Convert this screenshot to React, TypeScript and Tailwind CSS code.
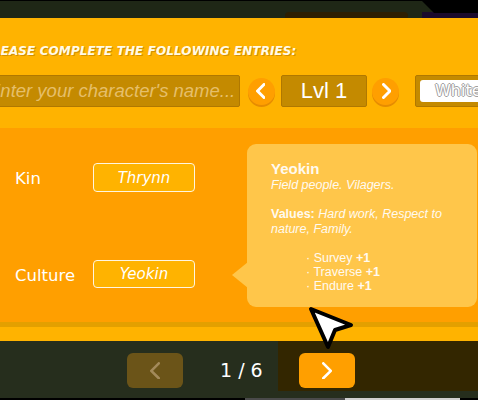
import React from "react";

const Chevron = ({ dir, color, size = 14, sw = 3 }: { dir: "l" | "r"; color: string; size?: number; sw?: number }) => (
  <svg width={size / 2 + sw} height={size + sw} viewBox={`0 0 ${size / 2 + sw} ${size + sw}`}>
    {dir === "l" ? (
      <polyline points={`${size / 2 + sw / 2},${sw / 2} ${sw / 2},${size / 2 + sw / 2} ${size / 2 + sw / 2},${size + sw / 2}`} fill="none" stroke={color} strokeWidth={sw} strokeLinecap="round" strokeLinejoin="round" />
    ) : (
      <polyline points={`${sw / 2},${sw / 2} ${size / 2 + sw / 2},${size / 2 + sw / 2} ${sw / 2},${size + sw / 2}`} fill="none" stroke={color} strokeWidth={sw} strokeLinecap="round" strokeLinejoin="round" />
    )}
  </svg>
);

export default function App() {
  return (
    <div className="relative w-[478px] h-[400px] overflow-hidden bg-[#262e1d]" style={{ fontFamily: '"DejaVu Sans", sans-serif' }}>
      {/* top bar */}
      <div className="relative h-[18px] bg-[#1f2716] border-t border-black flex items-end">
        <div className="ml-[285px] w-[123px] h-[6px] rounded-t-[4px] bg-[#2e1f02]" />
        <div className="ml-[14px] flex-1 h-[6px] bg-[#1b0b2c]" />
        <svg className="absolute right-0 top-0" width="56" height="12" viewBox="0 0 56 12">
          <polygon points="0,0 56,0 56,12 12,12" fill="#000" />
        </svg>
      </div>

      {/* top orange */}
      <div className="h-[110px] bg-[#ffb300] pt-[26px] overflow-hidden">
        <div
          className="ml-[-16px] whitespace-nowrap text-[12px] leading-[14px] font-bold italic text-[#fffbe8] tracking-[0.1px] [text-shadow:1px_1px_0_#d48f00]"
        >
          PLEASE COMPLETE THE FOLLOWING ENTRIES:
        </div>
        <div className="mt-[17px] flex items-center">
          <div className="ml-[-22px] w-[262px] h-[32px] shrink-0 bg-[#c48a00] border border-[#b07800] rounded-[2px] flex items-center pl-[9px] overflow-hidden">
            <span className="whitespace-nowrap italic text-[18.5px] text-[#e6bf6a]" style={{ fontFamily: '"Liberation Sans", Arial, sans-serif' }}>
              Enter your character's name...
            </span>
          </div>
          <div className="ml-[8px] w-[27px] h-[27px] shrink-0 rounded-full bg-[#ff9f00] shadow-[0_2px_0_#e68c00] flex items-center justify-center pr-[2px]">
            <Chevron dir="l" color="#fff" size={13} sw={3} />
          </div>
          <div className="ml-[6px] w-[86px] h-[32px] shrink-0 bg-[#c48a00] border border-[#b07800] rounded-[2px] flex items-center justify-center">
            <span className="text-[22px] text-white leading-none" style={{ fontFamily: '"Liberation Sans", Arial, sans-serif' }}>Lvl 1</span>
          </div>
          <div className="ml-[5px] w-[27px] h-[27px] shrink-0 rounded-full bg-[#ff9f00] shadow-[0_2px_0_#e68c00] flex items-center justify-center pl-[2px]">
            <Chevron dir="r" color="#fff" size={13} sw={3} />
          </div>
          <div className="ml-[16px] w-[80px] h-[32px] shrink-0 bg-[#c48a00] border border-[#b07800] rounded-[2px] p-[4px] pr-0">
            <div className="h-full bg-white rounded-l-[3px] flex items-center pl-[15px]">
              <span
                className="text-[16px] text-white leading-none [text-shadow:-1px_0_0_#a0a0a0,1px_0_0_#a0a0a0,0_-1px_0_#a0a0a0,0_1px_0_#a0a0a0]"
              >
                White
              </span>
            </div>
          </div>
        </div>
      </div>

      {/* middle section */}
      <div className="h-[194px] bg-[#ff9f00] flex">
        <div className="w-[232px] shrink-0 pt-[35px]">
          <div className="flex items-center h-[29px]">
            <div className="w-[93px] pl-[15px] pt-[4px] text-[16.5px] text-white">Kin</div>
            <div className="w-[102px] h-[29px] rounded-[4px] border border-[#fff6e0] bg-[#ffb300] flex items-center justify-center pt-[1px]">
              <span className="italic text-[15px] text-white">Thrynn</span>
            </div>
          </div>
          <div className="flex items-center h-[28px] mt-[68px]">
            <div className="w-[93px] pl-[15px] pt-[4px] text-[16.5px] text-white">Culture</div>
            <div className="w-[102px] h-[28px] rounded-[4px] border border-[#fff6e0] bg-[#ffb300] flex items-center justify-center">
              <span className="italic text-[15px] text-white">Yeokin</span>
            </div>
          </div>
        </div>
        <div className="relative ml-[15px] mt-[16px] w-[230px] h-[163px] rounded-[9px] bg-[#ffc64a] pl-[24px] pr-[16px] pt-[16px] text-[#fffaf0]" style={{ fontFamily: '"Liberation Sans", Arial, sans-serif' }}>
          <svg className="absolute left-[-15px] top-[118px]" width="16" height="26" viewBox="0 0 16 26">
            <polygon points="16,0 0,13 16,26" fill="#ffc64a" />
          </svg>
          <div className="text-[15px] font-bold leading-[18px]">Yeokin</div>
          <div className="text-[12.5px] leading-[14.5px]">
            <div className="italic">Field people. Vilagers.</div>
            <div className="h-[14.5px]" />
            <div>
              <span className="font-bold">Values: </span>
              <span className="italic">Hard work, Respect to nature, Family.</span>
            </div>
            <div className="h-[14.5px]" />
            <div className="ml-[35px] leading-[14px]">
              <div>· Survey <span className="font-bold">+1</span></div>
              <div>· Traverse <span className="font-bold">+1</span></div>
              <div>· Endure <span className="font-bold">+1</span></div>
            </div>
          </div>
        </div>
      </div>

      {/* stripes */}
      <div className="h-[5px] bg-[#e3a000]" />
      <div className="h-[14px] bg-[#ffb300]" />

      {/* bottom pager */}
      <div className="h-[57px] flex">
        <div className="w-[278px] shrink-0 flex items-start pl-[127px] pt-[12px]">
          <div className="w-[56px] h-[35px] rounded-[6px] bg-[#6b5418] flex items-center justify-center">
            <Chevron dir="l" color="#a38a5a" size={15} sw={2.6} />
          </div>
          <div className="ml-[37px] h-[35px] flex items-center text-[19px] text-white leading-none">1 / 6</div>
        </div>
        <div className="flex-1 flex flex-col">
          <div className="h-[50px] bg-[#332600] pl-[21px] pt-[12px]">
            <div className="w-[56px] h-[35px] rounded-[6px] bg-[#ff9f00] flex items-center justify-center">
              <Chevron dir="r" color="#fff" size={15} sw={2.6} />
            </div>
          </div>
        </div>
      </div>
      <div className="h-[2px] bg-black flex">
        <div className="ml-[245px] w-[100px] bg-[#4a4a4a]" />
        <div className="w-[115px] bg-[#cfcfcf]" />
      </div>

      {/* cursor */}
      <svg className="absolute left-[300px] top-[298px]" width="60" height="56" viewBox="0 0 60 56">
        <polygon points="11,11 51,27 35,32 28,49" fill="#fff" stroke="#000" strokeWidth="4" strokeLinejoin="round" />
      </svg>
    </div>
  );
}
